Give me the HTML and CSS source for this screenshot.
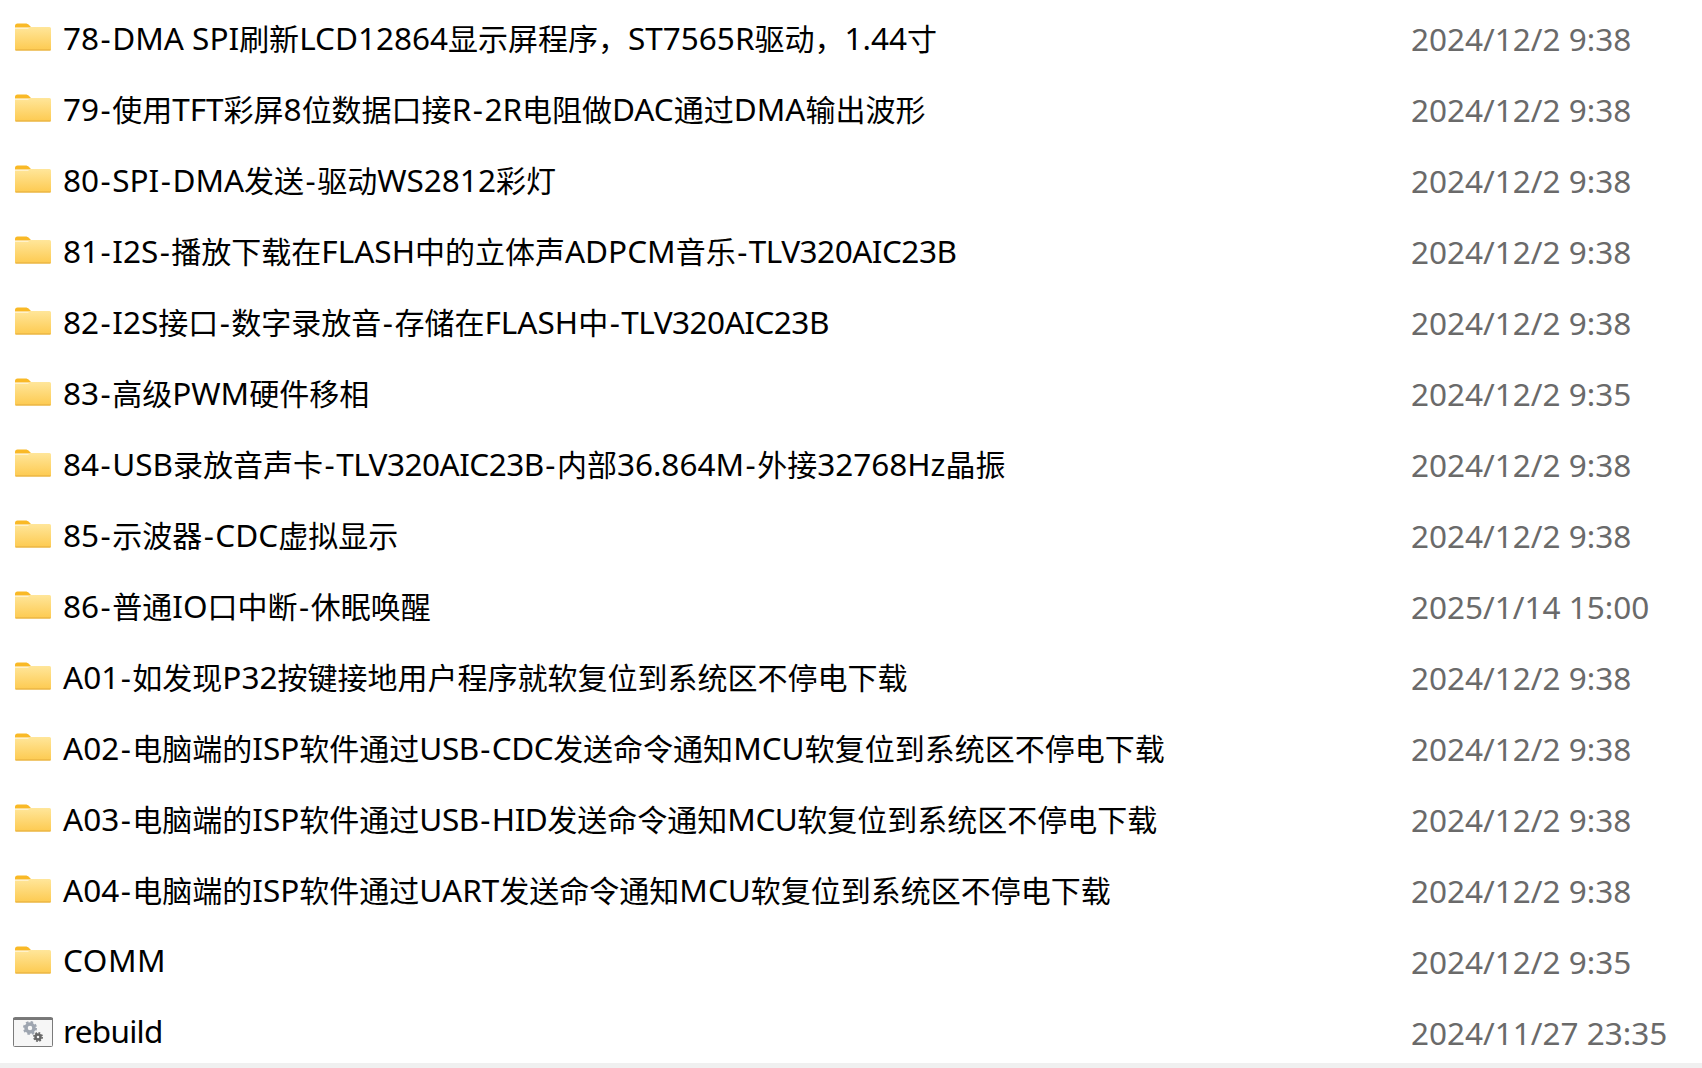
FILE: index.html
```html
<!DOCTYPE html>
<html lang="en">
<head>
    <meta charset="UTF-8">
    <title>Files</title>
    <link rel="stylesheet" href="styles.css">
</head>
<body>
    <svg class="defs" width="0" height="0">
        <defs>
            <linearGradient id="folder-body" x1="0" y1="0" x2="0" y2="1">
                <stop offset="0" stop-color="#ffe69a"/>
                <stop offset="1" stop-color="#fdca50"/>
            </linearGradient>
            <symbol id="folder" viewBox="0 0 36 28">
                <path d="M0 3a2.500 2.500 0 0 1 2.500-2.500h8c1.500 0 2.500.5 3.500 1.500l2.500 2.500H0z" fill="#f9b926"/>
                <path d="M0 5.500h13l3-1.500h18.500a1.500 1.500 0 0 1 1.500 1.500v21a1 1 0 0 1-1 1H1a1 1 0 0 1-1-1z" fill="url(#folder-body)"/>
                <path d="M.5 27h35" stroke="#e2ab3d" stroke-width="1"/>
            </symbol>
            <symbol id="exe" viewBox="0 0 40 30">
                <rect x=".5" y=".5" width="39" height="29" rx="1" fill="#f6f6f6" stroke="#7b7b7b"/>
                <path d="M0 1h40v2H0z" fill="#777"/>
                <circle cx="17" cy="11" r="4" fill="none" stroke="#9ea5b0" stroke-width="3.500"/>
                <circle cx="17" cy="11" r="6" fill="none" stroke="#9ea5b0" stroke-width="2" stroke-dasharray="2.500 2.200"/>
                <circle cx="25" cy="20" r="2.500" fill="none" stroke="#666" stroke-width="2.500"/>
                <circle cx="25" cy="20" r="4.200" fill="none" stroke="#666" stroke-width="1.500" stroke-dasharray="1.800 1.500"/>
            </symbol>
        </defs>
    </svg>

    <div class="list">
        <div class="row"><svg class="icon"><use href="#folder"/></svg><span class="name">78<span class="dash">-</span>DMA SPI<span class="zh">刷新</span>LCD12864<span class="zh">显示屏程序，</span>ST7565R<span class="zh">驱动，</span>1.44<span class="zh">寸</span></span><span class="date">2024/12/2 9:38</span></div>
        <div class="row"><svg class="icon"><use href="#folder"/></svg><span class="name">79<span class="dash">-</span><span class="zh">使用</span>TFT<span class="zh">彩屏</span>8<span class="zh">位数据口接</span>R<span class="dash">-</span>2R<span class="zh">电阻做</span>DAC<span class="zh">通过</span>DMA<span class="zh">输出波形</span></span><span class="date">2024/12/2 9:38</span></div>
        <div class="row"><svg class="icon"><use href="#folder"/></svg><span class="name">80<span class="dash">-</span>SPI<span class="dash">-</span>DMA<span class="zh">发送</span><span class="dash">-</span><span class="zh">驱动</span>WS2812<span class="zh">彩灯</span></span><span class="date">2024/12/2 9:38</span></div>
        <div class="row"><svg class="icon"><use href="#folder"/></svg><span class="name">81<span class="dash">-</span>I2S<span class="dash">-</span><span class="zh">播放下载在</span>FLASH<span class="zh">中的立体声</span>ADPCM<span class="zh">音乐</span><span class="dash">-</span><span class="tight">TLV320AIC23B</span></span><span class="date">2024/12/2 9:38</span></div>
        <div class="row"><svg class="icon"><use href="#folder"/></svg><span class="name">82<span class="dash">-</span>I2S<span class="zh">接口</span><span class="dash">-</span><span class="zh">数字录放音</span><span class="dash">-</span><span class="zh">存储在</span>FLASH<span class="zh">中</span><span class="dash">-</span><span class="tight">TLV320AIC23B</span></span><span class="date">2024/12/2 9:38</span></div>
        <div class="row"><svg class="icon"><use href="#folder"/></svg><span class="name">83<span class="dash">-</span><span class="zh">高级</span>PWM<span class="zh">硬件移相</span></span><span class="date">2024/12/2 9:35</span></div>
        <div class="row"><svg class="icon"><use href="#folder"/></svg><span class="name">84<span class="dash">-</span>USB<span class="zh">录放音声卡</span><span class="dash">-</span><span class="tight">TLV320AIC23B</span><span class="dash">-</span><span class="zh">内部</span>36.864M<span class="dash">-</span><span class="zh">外接</span>32768Hz<span class="zh">晶振</span></span><span class="date">2024/12/2 9:38</span></div>
        <div class="row"><svg class="icon"><use href="#folder"/></svg><span class="name">85<span class="dash">-</span><span class="zh">示波器</span><span class="dash">-</span>CDC<span class="zh">虚拟显示</span></span><span class="date">2024/12/2 9:38</span></div>
        <div class="row"><svg class="icon"><use href="#folder"/></svg><span class="name">86<span class="dash">-</span><span class="zh">普通</span>IO<span class="zh">口中断</span><span class="dash">-</span><span class="zh">休眠唤醒</span></span><span class="date">2025/1/14 15:00</span></div>
        <div class="row"><svg class="icon"><use href="#folder"/></svg><span class="name">A01<span class="dash">-</span><span class="zh">如发现</span>P32<span class="zh">按键接地用户程序就软复位到系统区不停电下载</span></span><span class="date">2024/12/2 9:38</span></div>
        <div class="row"><svg class="icon"><use href="#folder"/></svg><span class="name">A02<span class="dash">-</span><span class="zh">电脑端的</span>ISP<span class="zh">软件通过</span><span class="tight">USB</span><span class="dash">-</span><span class="tight">CDC</span><span class="zh">发送命令通知</span>MCU<span class="zh">软复位到系统区不停电下载</span></span><span class="date">2024/12/2 9:38</span></div>
        <div class="row"><svg class="icon"><use href="#folder"/></svg><span class="name">A03<span class="dash">-</span><span class="zh">电脑端的</span>ISP<span class="zh">软件通过</span><span class="tight">USB</span><span class="dash">-</span><span class="tight">HID</span><span class="zh">发送命令通知</span><span class="tight">MCU</span><span class="zh">软复位到系统区不停电下载</span></span><span class="date">2024/12/2 9:38</span></div>
        <div class="row"><svg class="icon"><use href="#folder"/></svg><span class="name">A04<span class="dash">-</span><span class="zh">电脑端的</span>ISP<span class="zh">软件通过</span>UART<span class="zh">发送命令通知</span>MCU<span class="zh">软复位到系统区不停电下载</span></span><span class="date">2024/12/2 9:38</span></div>
        <div class="row"><svg class="icon"><use href="#folder"/></svg><span class="name name-comm">COMM</span><span class="date">2024/12/2 9:35</span></div>
        <div class="row"><svg class="icon icon-exe"><use href="#exe"/></svg><span class="name name-exe">rebuild</span><span class="date">2024/11/27 23:35</span></div>
    </div>
    <div class="status"></div>
</body>
</html>
```

FILE: styles.css
```css
html, body {
    margin: 0;
    height: 100%;
}
body {
    display: flex;
    flex-direction: column;
    background-color: #fff;
    font-family: "Noto Sans", "Noto Sans CJK SC", sans-serif;
    font-size: 31.5px;
    overflow: hidden;
}
.defs {
    position: absolute;
}
.list {
    flex: 1;
    min-height: 0;
    overflow: hidden;
    padding-top: 1px;
}
.row {
    display: flex;
    align-items: center;
    height: 71px;
    padding-left: 15px;
    white-space: nowrap;
}
.icon {
    flex: none;
    width: 36px;
    height: 28px;
    margin-top: 1px;
    margin-right: 12px;
}
.icon-exe {
    width: 40px;
    height: 30px;
    margin-top: 3px;
    margin-left: -2px;
    margin-right: 10px;
}
.name {
    width: 1348px;
    color: #000;
}
.name-comm {
    letter-spacing: 0.5px;
}
.name-exe {
    letter-spacing: -0.7px;
}
.zh {
    font-size: 30px;
}
/* hyphen is wider in the original font */
.dash {
    padding: 0 1.5px;
}
.tight {
    letter-spacing: -0.5px;
}
.date {
    padding-top: 3px;
    color: #6a6a6a;
}
.status {
    flex: none;
    height: 5px;
    background-color: #f0f0f0;
}
```
